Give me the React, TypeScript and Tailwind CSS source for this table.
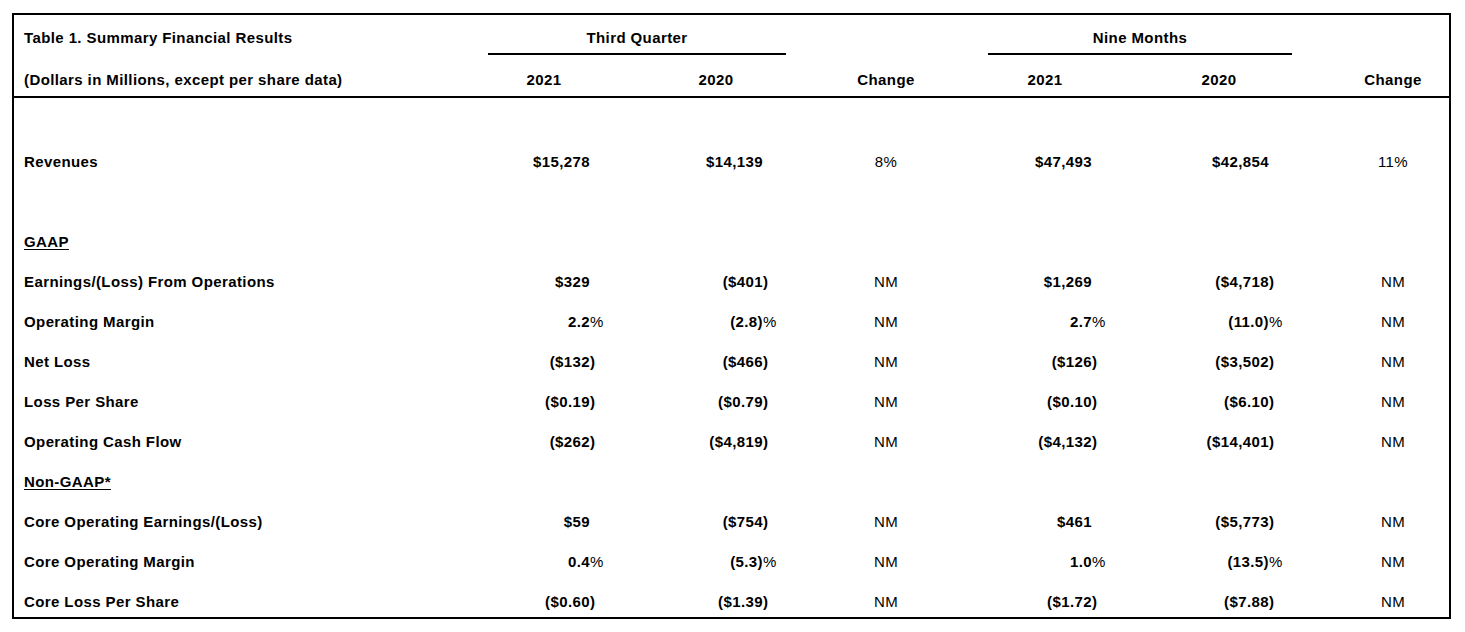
const cols = 'grid grid-cols-[446px_168px_176px_164px_154px_194px_133px]';

type Row =
  | { kind: 'section'; label: string }
  | { kind: 'gap'; h: string }
  | { kind: 'data'; label: string; v: string[]; last?: boolean };

const rows: Row[] = [
  { kind: 'gap', h: 'h-[44px]' },
  { kind: 'data', label: 'Revenues', v: ['$15,278', '$14,139', '8%', '$47,493', '$42,854', '11%'] },
  { kind: 'gap', h: 'h-[40px]' },
  { kind: 'section', label: 'GAAP' },
  { kind: 'data', label: 'Earnings/(Loss) From Operations', v: ['$329', '($401)', 'NM', '$1,269', '($4,718)', 'NM'] },
  { kind: 'data', label: 'Operating Margin', v: ['2.2%', '(2.8)%', 'NM', '2.7%', '(11.0)%', 'NM'] },
  { kind: 'data', label: 'Net Loss', v: ['($132)', '($466)', 'NM', '($126)', '($3,502)', 'NM'] },
  { kind: 'data', label: 'Loss Per Share', v: ['($0.19)', '($0.79)', 'NM', '($0.10)', '($6.10)', 'NM'] },
  { kind: 'data', label: 'Operating Cash Flow', v: ['($262)', '($4,819)', 'NM', '($4,132)', '($14,401)', 'NM'] },
  { kind: 'section', label: 'Non-GAAP*' },
  { kind: 'data', label: 'Core Operating Earnings/(Loss)', v: ['$59', '($754)', 'NM', '$461', '($5,773)', 'NM'] },
  { kind: 'data', label: 'Core Operating Margin', v: ['0.4%', '(5.3)%', 'NM', '1.0%', '(13.5)%', 'NM'] },
  { kind: 'data', label: 'Core Loss Per Share', v: ['($0.60)', '($1.39)', 'NM', '($1.72)', '($7.88)', 'NM'], last: true },
];

// right padding that puts the figure's last digit on the column's anchor
const anchorPad = ['pr-[38px]', 'pr-[41px]', '', 'pr-[30px]', 'pr-[47px]', ''];

function Figure({ value, pad }: { value: string; pad: string }) {
  let main = value;
  let hang = '';
  if (value.endsWith('%')) { main = value.slice(0, -1); hang = '%'; }
  else if (value.endsWith(')')) { main = value.slice(0, -1); hang = ')'; }
  return (
    <div className={`text-right whitespace-nowrap font-bold ${pad}`}>
      <span>{main}</span>
      <span className={`inline-block w-0 text-left ${hang === '%' ? 'font-normal' : ''}`}>{hang}</span>
    </div>
  );
}

export default function App() {
  return (
    <div className="min-h-screen bg-white pt-[13px] pl-[12px] text-black font-['Liberation_Sans',Arial,sans-serif] text-[15px] leading-[16px] tracking-[0.4px]">
      <div className="w-[1439px] border-2 border-black">
        {/* header */}
        <div className="border-b-2 border-black font-bold">
          <div className={cols}>
            <div className="h-[40px] pt-[15px] pl-[10px]">Table 1. Summary Financial Results</div>
            <div className="col-span-2 ml-[28px] mr-[18px] flex flex-col">
              <div className="h-[38px] pt-[15px] text-center">Third Quarter</div>
              <div className="h-[2px] bg-black" />
            </div>
            <div />
            <div className="col-span-2 ml-[20px] mr-[24px] flex flex-col">
              <div className="h-[38px] pt-[15px] text-center">Nine Months</div>
              <div className="h-[2px] bg-black" />
            </div>
            <div />
          </div>
          <div className={`${cols} h-[41px] pt-[17px]`}>
            <div className="pl-[10px]">(Dollars in Millions, except per share data)</div>
            <div className="text-center">2021</div>
            <div className="text-center">2020</div>
            <div className="text-center">Change</div>
            <div className="text-center">2021</div>
            <div className="text-center">2020</div>
            <div className="text-center pl-[21px]">Change</div>
          </div>
        </div>

        {/* body */}
        {rows.map((r, i) => {
          if (r.kind === 'gap') return <div key={i} className={r.h} />;
          if (r.kind === 'section')
            return (
              <div key={i} className="h-[40px] pt-[12px] pl-[10px] font-bold">
                <span className="underline underline-offset-[2px]">{r.label}</span>
              </div>
            );
          return (
            <div key={i} className={`${cols} ${r.last ? 'h-[35px]' : 'h-[40px]'} pt-[12px]`}>
              <div className="pl-[10px] font-bold">{r.label}</div>
              {r.v.map((v, j) =>
                j === 2 || j === 5 ? (
                  <div key={j} className={`text-center ${j === 5 ? 'pl-[21px]' : ''}`}>{v}</div>
                ) : (
                  <Figure key={j} value={v} pad={anchorPad[j]} />
                )
              )}
            </div>
          );
        })}
      </div>
    </div>
  );
}
